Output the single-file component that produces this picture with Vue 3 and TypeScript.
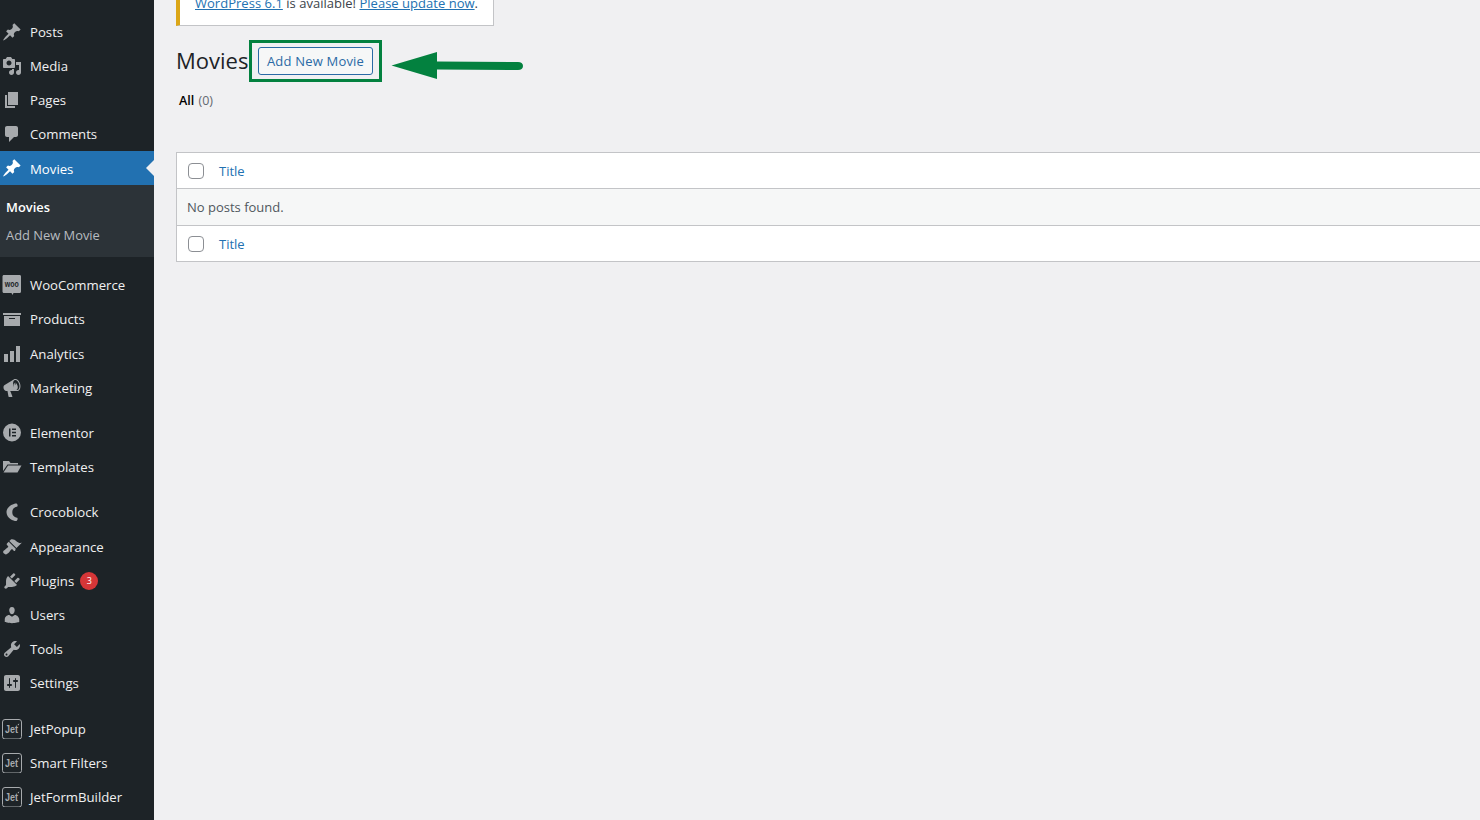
<script setup lang="ts">
type Kind = "dash" | "woo" | "elementor" | "folder" | "croco" | "jet";
interface MenuItem {
  label: string;
  icon: Kind;
  d?: string;
  gap?: boolean;
  nudge?: boolean;
  count?: number;
}

const pin =
  "M10.44 3.02l1.82-1.82 6.36 6.35-1.83 1.82c-1.05-.68-2.48-.57-3.41.36l-.75.75c-.92.93-1.04 2.35-.35 3.41l-1.83 1.82-2.41-2.41-2.8 2.79c-.42.42-3.38 2.71-3.8 2.29s1.86-3.39 2.28-3.81l2.79-2.79L4.1 9.36l1.83-1.82c1.05.69 2.48.57 3.4-.36l.75-.75c.93-.92 1.05-2.35.36-3.41z";

const topItems: MenuItem[] = [
  { label: "Posts", icon: "dash", d: pin },
  {
    label: "Media",
    icon: "dash",
    d: "M13 11V4c0-.55-.45-1-1-1h-1.67L9 1H5L3.67 3H2c-.55 0-1 .45-1 1v7c0 .55.45 1 1 1h10c.55 0 1-.45 1-1zM7 4.5c1.38 0 2.5 1.12 2.5 2.5S8.38 9.5 7 9.5 4.5 8.38 4.5 7 5.62 4.5 7 4.5zM14 6h5v10.5c0 1.38-1.12 2.5-2.5 2.5S14 17.88 14 16.5s1.12-2.5 2.5-2.5c.17 0 .34.02.5.05V9h-3V6zm-4 8.05V13h2v3.5c0 1.38-1.12 2.5-2.5 2.5S7 17.88 7 16.5 8.12 14 9.5 14c.17 0 .34.02.5.05z",
  },
  { label: "Pages", icon: "dash", d: "M6 15V2h10v13H6zm-1 1h8v2H3V5h2v11z" },
  {
    label: "Comments",
    icon: "dash",
    d: "M5 2h9c1.1 0 2 .9 2 2v7c0 1.1-.9 2-2 2h-2l-5 5v-5H5c-1.1 0-2-.9-2-2V4c0-1.1.9-2 2-2z",
  },
];

const restItems: MenuItem[] = [
  { label: "WooCommerce", icon: "woo" },
  { label: "Products", icon: "dash", d: "M19 4v2H1V4h18zM2 7h16v10H2V7zm11 3V9H7v1h6z" },
  { label: "Analytics", icon: "dash", nudge: true, d: "M18 18V2h-4v16h4zm-6 0V7H8v11h4zm-6 0v-8H2v8h4z" },
  {
    label: "Marketing",
    icon: "dash",
    d: "M18.15 5.94c.46 1.62.38 3.22-.02 4.48-.42 1.28-1.26 2.18-2.3 2.48-.16.06-.26.06-.4.06-.06.02-.12.02-.18.02-.06.02-.14.02-.22.02h-6.8l2.22 5.5c.02.14-.06.26-.14.34-.08.1-.24.16-.34.16H6.95c-.1 0-.26-.06-.34-.16-.08-.08-.16-.2-.14-.34l-1-5.5H4.25l-.02-.02c-.5.06-1.08-.18-1.54-.62s-.88-1.08-1.06-1.88c-.24-.8-.2-1.56-.02-2.2.18-.62.58-1.08 1.06-1.3l.02-.02 9-5.4c.1-.06.18-.1.24-.16.06-.04.14-.08.24-.12.16-.08.28-.12.5-.18 1.04-.3 2.24.1 3.22.98s1.76 2.24 2.22 3.86zm-2.58 5.98h-.02c.4-.1.74-.34 1.04-.7.58-.7.86-1.76.86-3.04 0-.64-.1-1.3-.28-1.98-.34-1.36-1.02-2.5-1.78-3.24s-1.68-1.1-2.46-.88c-.82.22-1.4.96-1.7 2-.32 1.04-.28 2.36.06 3.72.38 1.36 1 2.5 1.8 3.24.78.74 1.62 1.1 2.48.88zm-2.54-7.08c.22-.04.42-.02.62.04.38.16.76.48 1.12 1s.62 1.18.8 1.92c.2.74.26 1.44.2 2.06-.06.6-.22 1.08-.5 1.4-.16.26-.4.42-.72.5-.28.08-.58.04-.88-.12-.38-.16-.68-.48-1.04-1.02-.36-.52-.64-1.18-.84-1.94-.18-.74-.24-1.44-.15-2.06.05-.6.22-1.06.53-1.4.2-.24.5-.4.86-.48zm.38 1.68c.16-.04.3-.1.4-.24.1-.12.14-.28.12-.48-.02-.18-.12-.34-.28-.48-.14-.14-.34-.18-.52-.14-.2.04-.36.14-.48.32-.1.16-.12.34-.04.52.06.2.18.34.36.44.16.1.3.12.44.06z",
  },
  { label: "Elementor", icon: "elementor", gap: true },
  { label: "Templates", icon: "folder" },
  { label: "Crocoblock", icon: "croco", gap: true },
  {
    label: "Appearance",
    icon: "dash",
    nudge: true,
    d: "M14.48 11.06L7.41 3.99l1.5-1.5c.5-.56 2.3-.47 3.51.32 1.21.8 1.43 1.28 2.91 2.1 1.18.64 2.45 1.26 4.45.85zm-.71.71L6.7 4.7 4.93 6.47c-.39.39-.39 1.02 0 1.41l1.06 1.06c.39.39.39 1.03 0 1.42-.6.6-1.43 1.11-2.21 1.69-.35.26-.7.53-1.01.84C1.43 13.23.4 14.98 2 16.58c1.6 1.6 3.35.57 4.69-.77.31-.31.58-.66.84-1.01.58-.78 1.09-1.61 1.69-2.21.39-.39 1.03-.39 1.42 0l1.06 1.06c.39.39 1.02.39 1.41 0z",
  },
  {
    label: "Plugins",
    icon: "dash",
    count: 3,
    d: "M13.11 4.36L9.87 7.6 8 5.73l3.24-3.24c.35-.34 1.05-.2 1.56.32.52.51.66 1.21.31 1.55zm-8 1.77l.91-1.12 9.01 9.01-1.19.84c-.71.71-2.63 1.16-3.82 1.16H6.14L4.9 17.26c-.59.59-1.54.59-2.12 0-.59-.58-.59-1.53 0-2.12l1.24-1.24v-3.88c0-1.13.4-3.19 1.09-3.89zm7.26 3.97l3.24-3.24c.34-.35 1.04-.21 1.55.31.52.51.66 1.21.31 1.55l-3.24 3.25z",
  },
  {
    label: "Users",
    icon: "dash",
    d: "M10 9.25c-2.27 0-2.73-3.44-2.73-3.44C7 4.02 7.82 2 9.97 2c2.16 0 2.98 2.02 2.71 3.81 0 0-.41 3.44-2.68 3.44zm0 2.57L12.72 10c2.39 0 4.52 2.33 4.52 4.53v2.49s-3.65 1.13-7.24 1.13c-3.65 0-7.24-1.13-7.24-1.13v-2.49c0-2.25 1.94-4.48 4.47-4.48z",
  },
  {
    label: "Tools",
    icon: "dash",
    d: "M16.68 9.77c-1.34 1.34-3.3 1.67-4.95.99l-5.41 6.52c-.99.99-2.59.99-3.58 0s-.99-2.59 0-3.57l6.52-5.42c-.68-1.65-.35-3.61.99-4.95 1.28-1.28 3.12-1.62 4.72-1.06l-2.89 2.89 2.82 2.82 2.86-2.87c.53 1.58.18 3.39-1.08 4.65zM3.81 16.21c.4.39 1.04.39 1.43 0 .4-.4.4-1.04 0-1.43-.39-.4-1.03-.4-1.43 0-.39.39-.39 1.03 0 1.43z",
  },
  {
    label: "Settings",
    icon: "dash",
    d: "M18 16V4c0-1.1-.9-2-2-2H4c-1.1 0-2 .9-2 2v12c0 1.1.9 2 2 2h12c1.1 0 2-.9 2-2zM8 11h1c.55 0 1 .45 1 1s-.45 1-1 1H8v1.5c0 .28-.22.5-.5.5s-.5-.22-.5-.5V13H6c-.55 0-1-.45-1-1s.45-1 1-1h1V5.5c0-.28.22-.5.5-.5s.5.22.5.5V11zm5-2h-1c-.55 0-1-.45-1-1s.45-1 1-1h1V5.5c0-.28.22-.5.5-.5s.5.22.5.5V7h1c.55 0 1 .45 1 1s-.45 1-1 1h-1v5.5c0 .28-.22.5-.5.5s-.5-.22-.5-.5V9z",
  },
  { label: "JetPopup", icon: "jet", gap: true, nudge: true },
  { label: "Smart Filters", icon: "jet" },
  { label: "JetFormBuilder", icon: "jet" },
];
</script>

<template>
  <div class="page">
    <aside class="sidebar">
      <ul class="menu">
        <li v-for="item in topItems" :key="item.label" class="item">
          <svg class="icon" viewBox="0 0 20 20"><path :d="item.d" /></svg>
          <span>{{ item.label }}</span>
        </li>
        <li class="item active">
          <svg class="icon" viewBox="0 0 20 20"><path :d="pin" /></svg>
          <span>Movies</span>
          <i class="notch"></i>
        </li>
      </ul>
      <ul class="submenu">
        <li class="current">Movies</li>
        <li>Add New Movie</li>
      </ul>
      <ul class="menu rest">
        <li
          v-for="item in restItems"
          :key="item.label"
          class="item"
          :class="{ gap: item.gap, nudge: item.nudge }"
        >
          <svg v-if="item.icon === 'dash'" class="icon" viewBox="0 0 20 20"><path :d="item.d" /></svg>
          <svg v-else-if="item.icon === 'woo'" class="icon" viewBox="0 0 20 20">
            <path d="M2 0h15.500c1 0 1.500.7 1.500 1.500v15c0 .8-.5 1.500-1.500 1.500h-6l-1 2-1-2H2c-1 0-1.500-.7-1.500-1.500v-15C.5.7 1 0 2 0z" />
            <text x="9.800" y="12" class="woo-text" text-anchor="middle" textLength="14" lengthAdjust="spacingAndGlyphs">woo</text>
          </svg>
          <svg v-else-if="item.icon === 'elementor'" class="icon" viewBox="0 0 20 20">
            <path fill-rule="evenodd" d="M10 .5a9 9 0 1 0 0 18 9 9 0 0 0 0-18zM7 5.500h1.500v8H7v-8zm3 0h4V7h-4V5.500zm0 3.250h4v1.500h-4v-1.500zM10 12h4v1.500h-4V12z" />
          </svg>
          <svg v-else-if="item.icon === 'folder'" class="icon" viewBox="0 0 20 20">
            <path d="M1 4h6l1.500 2H16v1.500H5.500L1 14V4z" />
            <path d="M6 8.500h13.500L15.500 15.500H1.500z" />
          </svg>
          <svg v-else-if="item.icon === 'croco'" class="icon" viewBox="0 0 20 20">
            <path d="M14.500 1.500C13.500.8 4.500 3.500 4.500 10.200S13.500 19.700 14.500 19c1-.5 1.500-2.500.8-3.200-.6-.6-5-.5-5-5.600s4.400-5 5-5.600c.7-.7.200-2.700-.8-3.100z" />
          </svg>
          <svg v-else class="icon" viewBox="0 0 20 20">
            <rect x=".5" y=".5" width="19" height="19.500" rx="2.500" class="jet-box" />
            <text x="9.500" y="13.500" class="jet-text" text-anchor="middle" textLength="13" lengthAdjust="spacingAndGlyphs">Jet</text>
            <path d="M15.500 5.500l1.800-1 -.6 2z" />
          </svg>
          <span>{{ item.label }}</span>
          <b v-if="item.count" class="count">{{ item.count }}</b>
        </li>
      </ul>
    </aside>

    <main class="content">
      <div class="notice">
        <a href="#">WordPress 6.1</a> is available! <a href="#">Please update now</a>.
      </div>
      <div class="heading">
        <h1>Movies</h1>
        <div class="callout">
          <button class="add-new">Add New Movie</button>
        </div>
        <svg class="arrow" width="134" height="30" viewBox="0 0 134 30">
          <path d="M.500 14.500L46 1v9.500l81 .5c3 0 5 1.500 5 4s-2 4-5 4l-81-.5V28z" />
        </svg>
      </div>
      <div class="views"><b>All</b> <span>(0)</span></div>

      <div class="table">
        <div class="row head">
          <span class="check"></span>
          <a href="#">Title</a>
        </div>
        <div class="row empty">No posts found.</div>
        <div class="row foot">
          <span class="check"></span>
          <a href="#">Title</a>
        </div>
      </div>
    </main>
  </div>
</template>

<style>
html,
body {
  margin: 0;
  overflow: hidden;
}
</style>

<style scoped>
.page {
  display: flex;
  width: 1480px;
  height: 820px;
  overflow: hidden;
  background: #f0f0f2;
  font-family: "Open Sans", "Liberation Sans", sans-serif;
  font-size: 13px;
  color: #3c434a;
}

.sidebar {
  flex: 0 0 154px;
  height: 820px;
  background: #1d2327;
  padding-top: 15px;
  box-sizing: border-box;
}

ul {
  list-style: none;
  margin: 0;
  padding: 0;
}

.item {
  position: relative;
  display: flex;
  align-items: center;
  height: 34px;
  padding-left: 2px;
  color: #f0f0f1;
  font-size: 13.200px;
}

.item.nudge {
  margin-top: 1px;
}

.item.gap {
  margin-top: 11px;
}

.item.gap.nudge {
  margin-top: 12px;
}

.rest {
  margin-top: 11px;
}

.icon {
  flex: none;
  width: 20px;
  height: 20px;
  margin-right: 8px;
  fill: #a7aaad;
}

.woo-text {
  font-family: "Liberation Sans", sans-serif;
  font-size: 9px;
  font-weight: 700;
  fill: #1d2327;
}

.jet-box {
  fill: none;
  stroke: #a7aaad;
  stroke-width: 1;
}

.jet-text {
  font-family: "Liberation Sans", sans-serif;
  font-size: 10px;
  font-weight: 700;
  fill: #a7aaad;
}

.active {
  background: #2271b1;
  color: #fff;
}

.active span {
  padding-top: 2px;
}

.active .icon {
  fill: #fff;
}

.notch {
  position: absolute;
  right: 0;
  top: 9px;
  border: 8px solid transparent;
  border-left-width: 0;
  border-right-color: #f0f0f2;
}

.submenu {
  display: flex;
  flex-direction: column;
  height: 72px;
  box-sizing: border-box;
  padding: 8px 0 0 6px;
  background: #2c3338;
  color: #b8bcc0;
  font-size: 12.900px;
}

.submenu li {
  height: 28px;
  line-height: 28px;
}

.current {
  color: #fff;
  font-weight: 600;
}

.count {
  display: inline-block;
  margin-left: 6px;
  width: 18px;
  height: 18px;
  border-radius: 50%;
  background: #d63638;
  color: #fff;
  font-size: 9px;
  font-weight: 400;
  line-height: 18px;
  text-align: center;
}

.content {
  flex: 1;
  min-width: 0;
  padding-left: 22px;
}

.notice {
  box-sizing: border-box;
  display: flex;
  align-items: flex-end;
  width: 318px;
  height: 26px;
  padding: 0 15px 12px 15px;
  background: #fff;
  border: 1px solid #c3c4c7;
  border-top: 0;
  border-left: 4px solid #dba617;
  white-space: pre;
  line-height: 20px;
  letter-spacing: 0.02px;
}

.notice a,
.row a {
  color: #2271b1;
}

.row a {
  text-decoration: none;
}

.heading {
  position: relative;
  display: flex;
  align-items: center;
  margin-top: 14px;
  height: 42px;
}

h1 {
  margin: 0 0 2px;
  width: 73px;
  font-size: 22px;
  font-weight: 400;
  color: #1d2327;
}

.callout {
  display: flex;
  align-items: center;
  box-sizing: border-box;
  height: 42px;
  padding: 0 6px;
  border: 3px solid #03813f;
}

.add-new {
  width: 115px;
  height: 28px;
  padding: 0;
  font: inherit;
  letter-spacing: 0.2px;
  color: #2a6aa5;
  background: #f6f7f7;
  border: 1px solid #2a6aa5;
  border-radius: 3px;
}

.arrow {
  position: absolute;
  left: 215px;
  top: 11px;
  fill: #03813f;
}

.views {
  margin: 9px 0 0 3px;
  line-height: 20px;
  color: #646970;
  font-size: 12.500px;
}

.views span {
  margin-left: 1px;
}

.views b {
  color: #000;
  font-weight: 600;
}

.table {
  width: 1340px;
  margin-top: 41px;
  background: #fff;
  border: 1px solid #c3c4c7;
}

.row {
  display: flex;
  align-items: center;
  box-sizing: border-box;
  height: 36px;
  padding-left: 11px;
}

.head {
  border-bottom: 1px solid #c3c4c7;
}

.empty {
  height: 37px;
  padding-left: 10px;
  background: #f6f7f7;
  color: #50575e;
  border-bottom: 1px solid #c3c4c7;
}

.foot {
  height: 35px;
}

.check {
  box-sizing: border-box;
  width: 16px;
  height: 16px;
  margin-right: 15px;
  background: #fff;
  border: 1px solid #8c8f94;
  border-radius: 4px;
}
</style>
